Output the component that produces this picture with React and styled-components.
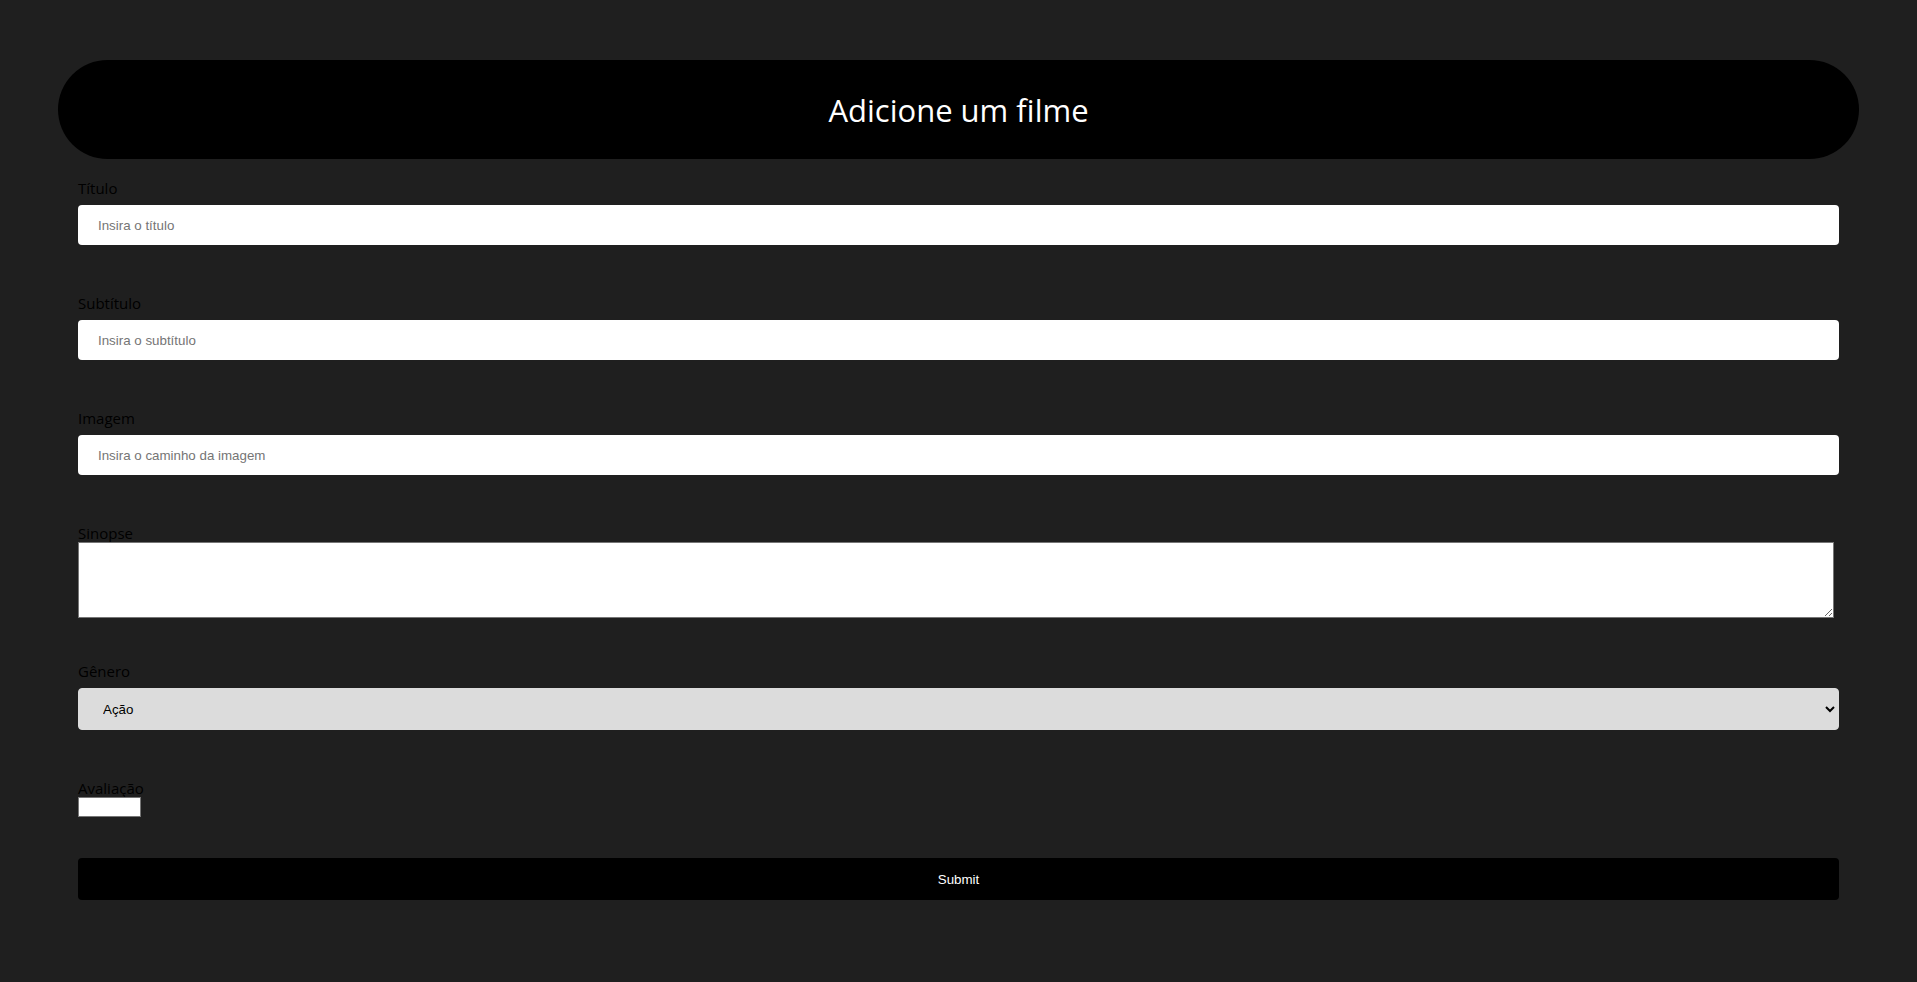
import React from "react";
import styled, { createGlobalStyle } from "styled-components";

const GlobalStyle = createGlobalStyle`
  html, body {
    margin: 0;
    padding: 0;
    background-color: #1f1f1f;
    font-family: "Open Sans", "Noto Sans", sans-serif;
  }
`;

const StyledPage = styled.div`
  width: 1801px;
  margin: 0 auto;
  padding: 60px 0 60px;
`;

const StyledHeader = styled.header`
  display: flex;
  align-items: center;
  justify-content: center;
  height: 99px;
  border-radius: 50px;
  background-color: #000;
`;

const StyledTitle = styled.h1`
  margin: 0;
  font-family: "Open Sans", "Noto Sans", sans-serif;
  font-size: 31px;
  font-weight: 400;
  color: #fff;
`;

const StyledForm = styled.form`
  display: flex;
  flex-direction: column;
  gap: 49px;
  padding: 20px 20px 0;
`;

const StyledField = styled.div`
  display: flex;
  flex-direction: column;
  align-items: flex-start;
  margin-top: ${p => p.$pull || 0}px;
`;

const StyledLabel = styled.label`
  display: block;
  font-size: 15px;
  line-height: 18px;
  color: #000;
`;

const StyledInput = styled.input`
  box-sizing: border-box;
  width: 100%;
  height: 40px;
  margin-top: 8px;
  padding: 0 20px;
  border: none;
  border-radius: 4px;
  background-color: #fff;
  font-family: "Liberation Sans", Arial, sans-serif;
  font-size: 13.33px;
  color: #000;
  &::placeholder {
    color: #757575;
  }
`;

const StyledTextArea = styled.textarea`
  box-sizing: border-box;
  display: block;
  width: 1756px;
  height: 76px;
  margin: 0;
  padding: 2px;
  border: 1px solid #767676;
  background-color: #fff;
  font-family: "Liberation Mono", monospace;
  font-size: 13.33px;
`;

const StyledSelect = styled.select`
  box-sizing: border-box;
  width: 100%;
  height: 42px;
  margin-top: 8px;
  padding: 0 16px 0 20px;
  border: 1px solid #dcdcdc;
  border-radius: 4px;
  background-color: #dcdcdc;
  font-family: "Liberation Sans", Arial, sans-serif;
  font-size: 13.33px;
  color: #000;
`;

const StyledRating = styled.input`
  box-sizing: border-box;
  width: 63px;
  height: 20px;
  margin: 0;
  padding: 1px 2px;
  border: 1px solid #767676;
  background-color: #fff;
  font-family: "Liberation Sans", Arial, sans-serif;
  font-size: 13.33px;
  -moz-appearance: textfield;
  &::-webkit-inner-spin-button,
  &::-webkit-outer-spin-button {
    -webkit-appearance: none;
    margin: 0;
  }
`;

const StyledSubmit = styled.button`
  width: 100%;
  height: 42px;
  margin-top: -8px;
  border: none;
  border-radius: 4px;
  background-color: #000;
  color: #fff;
  font-family: "Liberation Sans", Arial, sans-serif;
  font-size: 13.33px;
  cursor: pointer;
`;

const genres = ["Ação", "Comédia", "Drama", "Terror", "Ficção"];

export default function App() {
  const [form, setForm] = React.useState({
    titulo: "",
    subtitulo: "",
    imagem: "",
    sinopse: "",
    genero: genres[0],
    avaliacao: ""
  });

  const handleChange = e => {
    setForm({ ...form, [e.target.name]: e.target.value });
  };

  const handleSubmit = e => {
    e.preventDefault();
  };

  return (
    <StyledPage>
      <GlobalStyle />
      <StyledHeader>
        <StyledTitle>Adicione um filme</StyledTitle>
      </StyledHeader>
      <StyledForm onSubmit={handleSubmit}>
        <StyledField>
          <StyledLabel htmlFor="titulo">Título</StyledLabel>
          <StyledInput
            id="titulo"
            name="titulo"
            placeholder="Insira o título"
            value={form.titulo}
            onChange={handleChange}
          />
        </StyledField>
        <StyledField>
          <StyledLabel htmlFor="subtitulo">Subtítulo</StyledLabel>
          <StyledInput
            id="subtitulo"
            name="subtitulo"
            placeholder="Insira o subtítulo"
            value={form.subtitulo}
            onChange={handleChange}
          />
        </StyledField>
        <StyledField>
          <StyledLabel htmlFor="imagem">Imagem</StyledLabel>
          <StyledInput
            id="imagem"
            name="imagem"
            placeholder="Insira o caminho da imagem"
            value={form.imagem}
            onChange={handleChange}
          />
        </StyledField>
        <StyledField>
          <StyledLabel htmlFor="sinopse">Sinopse</StyledLabel>
          <StyledTextArea
            id="sinopse"
            name="sinopse"
            value={form.sinopse}
            onChange={handleChange}
          />
        </StyledField>
        <StyledField $pull={-5}>
          <StyledLabel htmlFor="genero">Gênero</StyledLabel>
          <StyledSelect
            id="genero"
            name="genero"
            value={form.genero}
            onChange={handleChange}
          >
            {genres.map(g => (
              <option key={g} value={g}>
                {g}
              </option>
            ))}
          </StyledSelect>
        </StyledField>
        <StyledField>
          <StyledLabel htmlFor="avaliacao">Avaliação</StyledLabel>
          <StyledRating
            id="avaliacao"
            name="avaliacao"
            type="number"
            value={form.avaliacao}
            onChange={handleChange}
          />
        </StyledField>
        <StyledSubmit type="submit">Submit</StyledSubmit>
      </StyledForm>
    </StyledPage>
  );
}
